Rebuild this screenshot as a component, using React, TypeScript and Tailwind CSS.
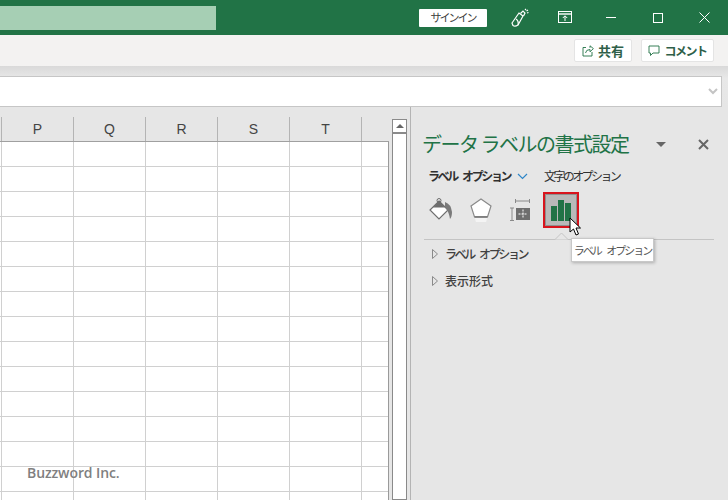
const jp = "font-['Noto_Sans_CJK_JP',sans-serif]";

function TitleBar() {
  return (
    <div className="flex h-[35px] items-center bg-[#217346] text-white">
      <div className="h-[24px] w-[216px] bg-[#a6cfb4]" />
      <div className={`ml-[203px] flex h-[18px] w-[68px] items-center justify-center rounded-[1px] bg-white text-[11px] tracking-[-2px] text-[#3d3d3d] ${jp}`}>
        サインイン
      </div>
      {/* coauthoring brush */}
      <svg className="ml-[23px]" width="20" height="20" viewBox="0 0 20 20" fill="none" stroke="white" strokeWidth="1.2">
        <path d="M2 15 L9 5 L13 8 L8 17 Q5 19 3 17.5 Z" />
        <path d="M8 17 Q9 13 6 11" />
        <path d="M10.5 5.5 L13 3 L15 5 L13.5 8" />
        <path d="M15 2 L16 1 M17 5 L18.5 4.5 M16.5 3 L18 2" />
      </svg>
      {/* ribbon display */}
      <svg className="ml-[28px]" width="14" height="13" viewBox="0 0 14 13" fill="none" stroke="white" strokeWidth="1">
        <rect x="0.5" y="0.5" width="13" height="11" />
        <path d="M0.5 3 H13.5" strokeWidth="1.4" />
        <path d="M7 10 V5 M4.8 7 L7 4.8 L9.2 7" />
      </svg>
      <div className="ml-[34px] h-px w-[10px] bg-white" />
      <div className="ml-[37px] h-[10px] w-[10px] border border-white" />
      <svg className="ml-[36px]" width="11" height="11" viewBox="0 0 11 11" stroke="white" strokeWidth="1">
        <path d="M0.5 0.5 L10.5 10.5 M10.5 0.5 L0.5 10.5" />
      </svg>
    </div>
  );
}

function ShareBar() {
  return (
    <div className={`flex h-[31px] items-center justify-end gap-[9px] bg-[#f3f2f1] pr-[14px] font-bold text-[#2f5f49] ${jp}`}>
      <div className="flex h-[23px] w-[58px] items-center justify-center gap-[4px] rounded-[2px] border border-[#e4e4e4] bg-white text-[13px]">
        <svg width="12" height="12" viewBox="0 0 12 12" fill="none" stroke="#217346" strokeWidth="0.9">
          <path d="M4 2.5 H1 V11 H10 V7" />
          <path d="M3.5 8 Q4 4.5 8 4.5 V6.8 L11.4 3.6 L8 0.8 V2.8" />
        </svg>
        共有
      </div>
      <div className="flex h-[23px] w-[73px] items-center justify-center gap-[4px] rounded-[2px] border border-[#e4e4e4] bg-white text-[12px] tracking-[-1.5px]">
        <svg width="12" height="12" viewBox="0 0 12 12" fill="none" stroke="#217346" strokeWidth="0.9">
          <path d="M1 1 H11 V8 H5 L2.5 10.5 V8 H1 Z" />
        </svg>
        コメント
      </div>
    </div>
  );
}

function FormulaBar() {
  return (
    <div className="h-[41px] bg-gradient-to-b from-[#d9d9d9] via-[#e8e8e8] via-30% to-[#e6e6e6] pt-[10px] pr-[6px]">
      <div className="flex h-[31px] items-center justify-end border-y border-r border-[#c6c6c6] bg-white pr-[3px]">
        <svg width="10" height="7" viewBox="0 0 10 7" fill="none" stroke="#c4c4c4" strokeWidth="2">
          <path d="M1 1 L5 5 L9 1" />
        </svg>
      </div>
    </div>
  );
}

function Sheet() {
  const columns = ["P", "Q", "R", "S", "T"];
  const rows = Array.from({ length: 15 }, (_, i) => i);
  return (
    <div className="relative w-[389px] shrink-0 pt-[10px]">
      <div className="flex h-[25px] w-[389px] border-b border-[#a0a0a0] font-['Liberation_Sans',sans-serif] text-[14px] text-[#444444]">
        <div className="w-[2px] border-r border-[#b4b4b4]" />
        {columns.map((c) => (
          <div key={c} className="flex w-[72px] items-center justify-center border-r border-[#b4b4b4]">
            {c}
          </div>
        ))}
      </div>
      <div className="w-[389px] border-r border-[#9a9a9a] bg-white">
        {rows.map((r) => (
          <div key={r} className="flex h-[25px] border-b border-[#d0d0d0]">
            <div className="w-[2px] border-r border-[#d0d0d0]" />
            {columns.map((c) => (
              <div key={c} className="w-[72px] border-r border-[#d0d0d0]" />
            ))}
          </div>
        ))}
      </div>
      <div className="absolute top-[356px] left-[27px] font-['Open_Sans',sans-serif] text-[14px] leading-[20px] font-semibold tracking-[-0.1px] text-[#808080]">
        Buzzword Inc.
      </div>
    </div>
  );
}

function ScrollBar() {
  return (
    <div className="mt-[12px] ml-[3px] flex w-[15px] shrink-0 flex-col border border-[#8a8a8a] bg-white">
      <div className="flex h-[14px] items-center justify-center border-b-2 border-[#8a8a8a]">
        <div className="h-0 w-0 border-x-[4px] border-b-[4px] border-x-transparent border-b-[#666666]" />
      </div>
    </div>
  );
}

function PanelIcons() {
  return (
    <div className="mt-[7px] flex h-[36px] items-center pl-[18px]">
      {/* fill & line */}
      <svg width="24" height="24" viewBox="0 0 24 24">
        <path d="M10 3 L19 12 L10 21 L1 12 Z" fill="white" stroke="#6e6e6e" strokeWidth="1.2" />
        <path d="M4 9.5 L10 3 L16 9.5 Z" fill="#6e6e6e" />
        <circle cx="10" cy="2.5" r="2" fill="none" stroke="#6e6e6e" strokeWidth="1" />
        <path d="M16 4 Q22 6 23 14 Q23 19 21 21 Q20 14 16 9 Z" fill="#7a7a7a" />
      </svg>
      {/* effects */}
      <svg className="ml-[17px]" width="22" height="26" viewBox="0 0 22 26">
        <path d="M11 2 L21 9 L17.5 20 H4.5 L1 9 Z" fill="white" stroke="#8a8a8a" strokeWidth="1.2" />
        <path d="M4.5 20 H17.5 L16 25 H6 Z" fill="#f4f4f4" />
        <path d="M4.5 20 H17.5" stroke="#6e6e6e" strokeWidth="1.6" />
      </svg>
      {/* size & properties */}
      <svg className="ml-[17px]" width="22" height="24" viewBox="0 0 22 24" fill="none">
        <path d="M6.5 1 V5 M20.5 1 V5 M6.5 3 H20.5" stroke="#8a8a8a" />
        <path d="M1 10 H5 M1 22.5 H5 M3 10 V22.5" stroke="#8a8a8a" />
        <rect x="7" y="10" width="14" height="12" fill="#6e6e6e" />
        <path d="M14 11.5 V20.5 M9.5 16 H18.5" stroke="white" strokeWidth="1" strokeDasharray="2 1" />
      </svg>
      {/* label options, selected */}
      <div className="ml-[12px] flex h-[36px] w-[36px] items-center justify-center border-2 border-[#d8141d] bg-[#b9b9b9] outline outline-1 -outline-offset-3 outline-[#8f8f8f]">
        <div className="flex h-[21px] items-end gap-[1px]">
          <div className="h-[15px] w-[6px] bg-[#217346]" />
          <div className="h-[21px] w-[6px] bg-[#217346]" />
          <div className="h-[18px] w-[6px] bg-[#217346]" />
        </div>
      </div>
    </div>
  );
}

function SectionRow({ label, className }: { label: string; className: string }) {
  return (
    <div className={`flex items-center pl-[21px] text-[12px] leading-[18px] font-medium text-[#404040] ${className}`}>
      <svg className="mr-[7px]" width="6" height="10" viewBox="0 0 6 10" fill="none" stroke="#8a8a8a">
        <path d="M0.5 0.5 L5.5 5 L0.5 9.5 Z" />
      </svg>
      {label}
    </div>
  );
}

function FormatPanel() {
  return (
    <div className={`relative flex-1 border-l border-[#b4b4b4] ${jp}`}>
      <div className="mt-[22px] flex h-[30px] items-center pl-[11px]">
        <div className="w-[223px] text-[20px] leading-[30px] font-normal tracking-[-1.5px] whitespace-nowrap text-[#217346]">
          データ ラベルの書式設定
        </div>
        <div className="ml-[11px] h-0 w-0 border-x-[5px] border-t-[5px] border-x-transparent border-t-[#666666]" />
        <svg className="ml-[32px]" width="11" height="11" viewBox="0 0 11 11" stroke="#666666" strokeWidth="2">
          <path d="M1 1 L10 10 M10 1 L1 10" />
        </svg>
      </div>
      <div className="mt-[8px] flex h-[18px] items-center pl-[17px] text-[12px] leading-[18px] whitespace-nowrap text-[#303030]">
        <span className="w-[85px] font-bold tracking-[-2.4px] [word-spacing:5px]">ラベル オプション</span>
        <svg className="ml-[4px]" width="11" height="7" viewBox="0 0 11 7" fill="none" stroke="#2e86c8" strokeWidth="1.2">
          <path d="M1 1 L5.5 5.5 L10 1" />
        </svg>
        <span className="ml-[16px] tracking-[-2.6px]">文字のオプション</span>
      </div>
      <PanelIcons />
      <div className="mt-[11px] ml-[13px] h-px w-[290px] bg-[#c4c4c4]" />
      <SectionRow label="ラベル オプション" className="mt-[5px] tracking-[-2.4px] [word-spacing:5px]" />
      <SectionRow label="表示形式" className="mt-[9px]" />

      {/* tooltip with its notch on the divider */}
      <svg className="absolute top-[125px] left-[144px]" width="13" height="8" viewBox="0 0 13 8">
        <path d="M0 7.5 L6.5 1 L13 7.5" fill="#e6e6e6" stroke="#c4c4c4" />
      </svg>
      <div className="absolute top-[131px] left-[160px] flex h-[24px] w-[83px] items-center justify-center border border-[#c8c8c8] bg-white text-[11px] tracking-[-2px] whitespace-nowrap text-[#555555] shadow-[1px_1px_3px_rgba(0,0,0,0.25)] [word-spacing:5px]">
        ラベル オプション
      </div>
      {/* cursor */}
      <svg className="absolute top-[110px] left-[158px]" width="13" height="20" viewBox="0 0 13 20">
        <path d="M1 1 V15 L4.5 12 L7 18 L9.5 17 L7 11 H11.5 Z" fill="white" stroke="black" strokeWidth="1" />
      </svg>
    </div>
  );
}

export default function App() {
  return (
    <div className="flex h-[500px] w-[728px] flex-col overflow-hidden bg-[#e6e6e6]">
      <TitleBar />
      <ShareBar />
      <FormulaBar />
      <div className="flex min-h-0 flex-1">
        <Sheet />
        <ScrollBar />
        <div className="w-[3px] shrink-0" />
        <FormatPanel />
      </div>
    </div>
  );
}
